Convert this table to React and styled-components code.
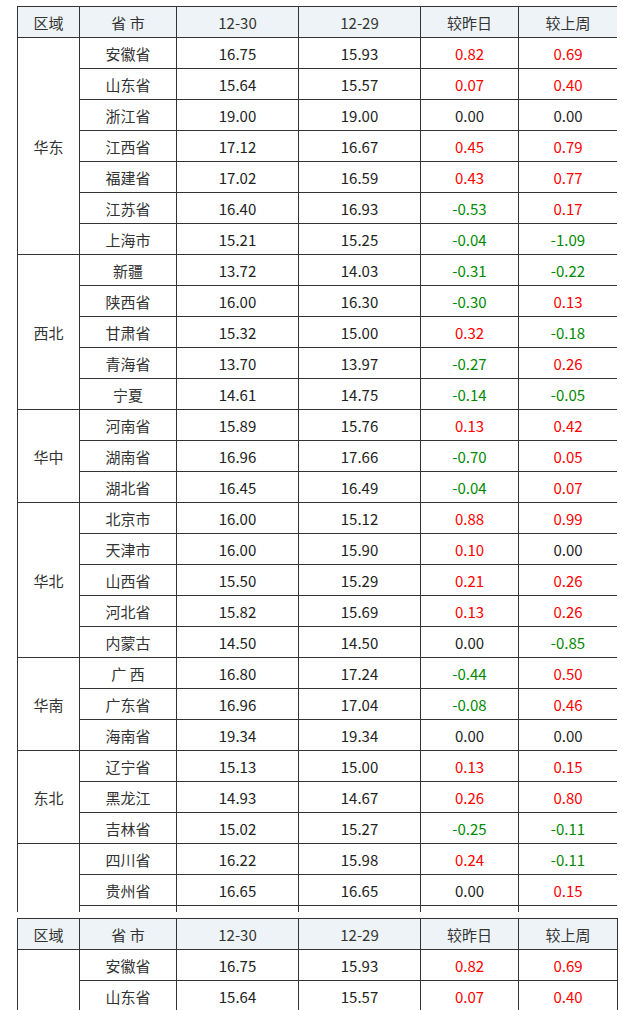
import React from "react";
import styled, { createGlobalStyle } from "styled-components";

const GlobalStyle = createGlobalStyle`
  html, body { margin: 0; padding: 0; background: #fff; overflow: hidden; }
  body { font-family: "Noto Sans CJK SC", "Noto Sans", sans-serif; }
`;

const Page = styled.div`
  padding: 6px 0 0 17px;
  width: 600px;
`;

const Viewport = styled.div`
  height: ${(p) => p.$h}px;
  overflow: hidden;
  margin-bottom: ${(p) => p.$gap || 0}px;
`;

const Table = styled.table`
  width: 600px;
  border-collapse: collapse;
  table-layout: fixed;
  font-size: 15px;
  color: #333;
`;

const Th = styled.th`
  height: 30px;
  padding: 0;
  border: 1px solid #333;
  background: #eef3f7;
  font-weight: normal;
  text-align: center;
  color: #333;
`;

const Td = styled.td`
  height: 30px;
  padding: 0;
  border: 1px solid #333;
  text-align: center;
  vertical-align: middle;
  color: ${(p) => p.$color || "#333"};
`;

const regions = [
  { name: "华东", rows: [
    ["安徽省", "16.75", "15.93", "0.82", "0.69"],
    ["山东省", "15.64", "15.57", "0.07", "0.40"],
    ["浙江省", "19.00", "19.00", "0.00", "0.00"],
    ["江西省", "17.12", "16.67", "0.45", "0.79"],
    ["福建省", "17.02", "16.59", "0.43", "0.77"],
    ["江苏省", "16.40", "16.93", "-0.53", "0.17"],
    ["上海市", "15.21", "15.25", "-0.04", "-1.09"],
  ]},
  { name: "西北", rows: [
    ["新疆", "13.72", "14.03", "-0.31", "-0.22"],
    ["陕西省", "16.00", "16.30", "-0.30", "0.13"],
    ["甘肃省", "15.32", "15.00", "0.32", "-0.18"],
    ["青海省", "13.70", "13.97", "-0.27", "0.26"],
    ["宁夏", "14.61", "14.75", "-0.14", "-0.05"],
  ]},
  { name: "华中", rows: [
    ["河南省", "15.89", "15.76", "0.13", "0.42"],
    ["湖南省", "16.96", "17.66", "-0.70", "0.05"],
    ["湖北省", "16.45", "16.49", "-0.04", "0.07"],
  ]},
  { name: "华北", rows: [
    ["北京市", "16.00", "15.12", "0.88", "0.99"],
    ["天津市", "16.00", "15.90", "0.10", "0.00"],
    ["山西省", "15.50", "15.29", "0.21", "0.26"],
    ["河北省", "15.82", "15.69", "0.13", "0.26"],
    ["内蒙古", "14.50", "14.50", "0.00", "-0.85"],
  ]},
  { name: "华南", rows: [
    ["广 西", "16.80", "17.24", "-0.44", "0.50"],
    ["广东省", "16.96", "17.04", "-0.08", "0.46"],
    ["海南省", "19.34", "19.34", "0.00", "0.00"],
  ]},
  { name: "东北", rows: [
    ["辽宁省", "15.13", "15.00", "0.13", "0.15"],
    ["黑龙江", "14.93", "14.67", "0.26", "0.80"],
    ["吉林省", "15.02", "15.27", "-0.25", "-0.11"],
  ]},
  { name: "西南", rows: [
    ["四川省", "16.22", "15.98", "0.24", "-0.11"],
    ["贵州省", "16.65", "16.65", "0.00", "0.15"],
    ["云南省", "15.80", "15.62", "0.18", "0.09"],
    ["重庆市", "16.10", "16.04", "0.06", "-0.02"],
    ["西藏", "17.20", "17.20", "0.00", "0.00"],
  ]},
];

const tone = (v) => {
  const n = parseFloat(v);
  if (n > 0) return "#ff0000";
  if (n < 0) return "#008a00";
  return "#222";
};

function PriceTable() {
  return (
    <Table>
      <colgroup>
        <col style={{ width: 62 }} />
        <col style={{ width: 97 }} />
        <col style={{ width: 122 }} />
        <col style={{ width: 122 }} />
        <col style={{ width: 98 }} />
        <col style={{ width: 99 }} />
      </colgroup>
      <thead>
        <tr>
          <Th>区域</Th>
          <Th>省 市</Th>
          <Th>12-30</Th>
          <Th>12-29</Th>
          <Th>较昨日</Th>
          <Th>较上周</Th>
        </tr>
      </thead>
      <tbody>
        {regions.map((r) =>
          r.rows.map((row, i) => (
            <tr key={r.name + i}>
              {i === 0 && <Td rowSpan={r.rows.length}>{r.name}</Td>}
              <Td>{row[0]}</Td>
              <Td $color="#222">{row[1]}</Td>
              <Td $color="#222">{row[2]}</Td>
              <Td $color={tone(row[3])}>{row[3]}</Td>
              <Td $color={tone(row[4])}>{row[4]}</Td>
            </tr>
          ))
        )}
      </tbody>
    </Table>
  );
}

export default function App() {
  return (
    <>
      <GlobalStyle />
      <Page>
        <Viewport $h={906} $gap={6}>
          <PriceTable />
        </Viewport>
        <PriceTable />
      </Page>
    </>
  );
}
